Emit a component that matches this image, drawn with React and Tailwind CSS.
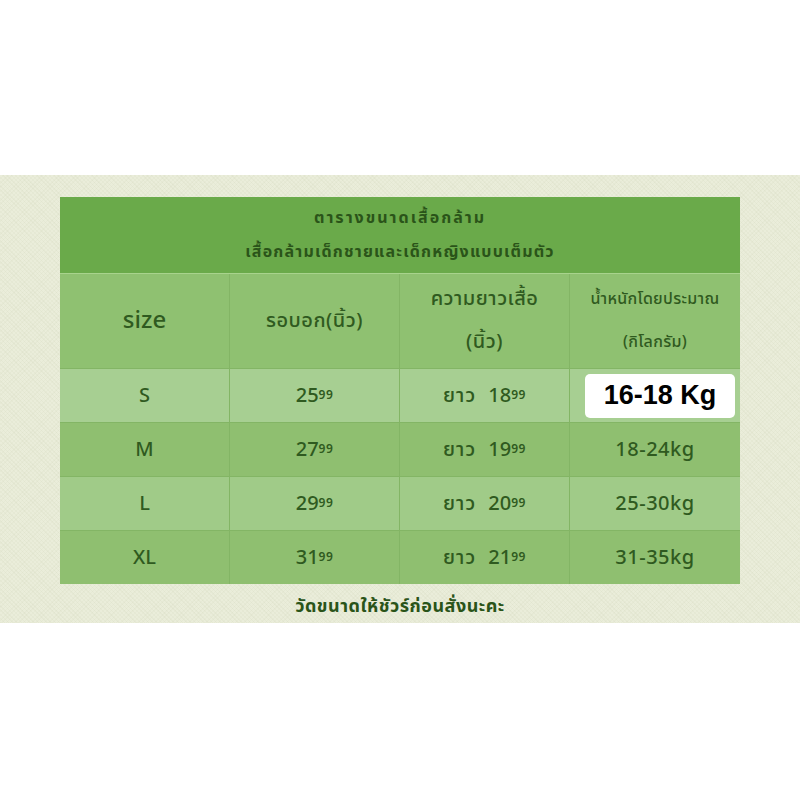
import React from "react";

const font = { fontFamily: '"Noto Sans Thai", "Noto Sans", "Liberation Sans", sans-serif' };

const rows = [
  { size: "S", chest: "25", len: "18", weight: null, bg: "bg-[#a7cf92]" },
  { size: "M", chest: "27", len: "19", weight: "18-24kg", bg: "bg-[#8fbf70]" },
  { size: "L", chest: "29", len: "20", weight: "25-30kg", bg: "bg-[#a0cb88]" },
  { size: "XL", chest: "31", len: "21", weight: "31-35kg", bg: "bg-[#8fbf70]" },
];

function Num({ n }) {
  return (
    <span>
      {n}
      <sup className="text-[12px] font-semibold relative -top-[3px] tracking-[0.5px]">99</sup>
    </span>
  );
}

export default function App() {
  return (
    <div className="w-[800px] h-[800px] bg-white" style={font}>
      <div className="h-[175px]" />
      <div className="h-[448px] bg-[#eaedda] bg-[repeating-linear-gradient(45deg,rgba(200,205,175,0.15)_0px,rgba(200,205,175,0.15)_1px,transparent_1px,transparent_3px),repeating-linear-gradient(-45deg,rgba(200,205,175,0.12)_0px,rgba(200,205,175,0.12)_1px,transparent_1px,transparent_3px)] pt-[22px] flex flex-col items-center">
        <div className="w-[680px] text-[#2f5a20]">
          <div className="h-[77px] bg-[#6aaa4a] text-[#2a5419] flex flex-col items-center justify-center gap-[8px] font-bold text-[16px] leading-[26px] border-b border-[#a8d38d]">
            <div className="tracking-[2px]">ตารางขนาดเสื้อกล้าม</div>
            <div className="tracking-[1.2px]">เสื้อกล้ามเด็กชายและเด็กหญิงแบบเต็มตัว</div>
          </div>
          <div className="grid grid-cols-[170px_170px_170px_170px] h-[94px] bg-[#8fc171] font-medium">
            <div className="flex items-center justify-center text-[24px] border-r border-[#83b565]">size</div>
            <div className="flex items-center justify-center text-[20px] tracking-[0.5px] border-r border-[#83b565]">รอบอก(นิ้ว)</div>
            <div className="flex flex-col items-center justify-center text-[20px] tracking-[0.5px] leading-[43px] border-r border-[#83b565]">
              <div>ความยาวเสื้อ</div>
              <div>(นิ้ว)</div>
            </div>
            <div className="flex flex-col items-center justify-center text-[16px] tracking-[0.3px] leading-[43px]">
              <div>น้ำหนักโดยประมาณ</div>
              <div>(กิโลกรัม)</div>
            </div>
          </div>
          {rows.map((r) => (
            <div key={r.size} className={`grid grid-cols-[170px_170px_170px_170px] h-[54px] border-t border-[#83b565] ${r.bg} text-[20px] font-medium`}>
              <div className="flex items-center justify-center border-r border-[#83b565]">{r.size}</div>
              <div className="flex items-center justify-center border-r border-[#83b565]"><Num n={r.chest} /></div>
              <div className="flex items-center justify-center gap-[12px] border-r border-[#83b565]">
                <span className="tracking-[1px]">ยาว</span>
                <Num n={r.len} />
              </div>
              <div className="flex items-center justify-center">
                {r.weight ? (
                  <span className="tracking-[0.5px]">{r.weight}</span>
                ) : (
                  <div className="ml-[10px] w-[150px] h-[44px] bg-white rounded-[5px] flex items-center justify-center text-black text-[27px] font-bold" style={{ fontFamily: '"Liberation Sans", Arial, sans-serif' }}>
                    16-18 Kg
                  </div>
                )}
              </div>
            </div>
          ))}
        </div>
        <div className="mt-[9px] text-[18px] font-bold tracking-[0.5px] text-[#2a5419]">วัดขนาดให้ชัวร์ก่อนสั่งนะคะ</div>
      </div>
    </div>
  );
}
